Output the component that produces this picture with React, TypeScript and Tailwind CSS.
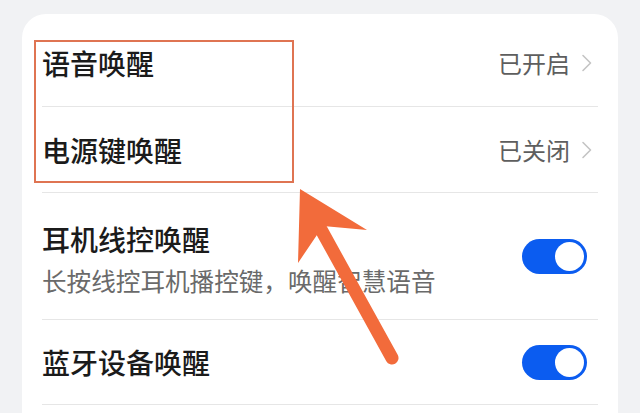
import React from 'react';

const font = { fontFamily: '"Noto Sans CJK SC", "Noto Sans", sans-serif' };

function Chevron() {
  return (
    <svg width="12" height="18" viewBox="0 0 12 18" className="ml-[11px] mr-[5px]">
      <path d="M2 1.5 L9.5 9 L2 16.5" fill="none" stroke="#c4c4c4" strokeWidth="1.6" strokeLinecap="round" strokeLinejoin="round" />
    </svg>
  );
}

function Toggle() {
  return (
    <div className="mr-[11px] flex h-[35px] w-[65px] items-center justify-end rounded-full bg-[#0b5cf0] px-[3px]">
      <div className="h-[29px] w-[29px] rounded-full bg-white" />
    </div>
  );
}

function LinkRow({ title, value, h }: { title: string; value: string; h: string }) {
  return (
    <div className={`flex items-center justify-between border-b border-[#e6e6e6] ${h}`}>
      <span className="text-[28px] leading-[40px] font-medium text-[#1b1b1b]">{title}</span>
      <div className="flex items-center">
        <span className="text-[24px] leading-[34px] text-[#5e5e5e]">{value}</span>
        <Chevron />
      </div>
    </div>
  );
}

export default function App() {
  return (
    <div className="relative h-[413px] w-[640px] overflow-hidden bg-[#f1f2f4] px-[22px] pt-[14px]" style={font}>
      <div className="rounded-t-[24px] bg-white px-5 pt-[6px]">
        <LinkRow title="语音唤醒" value="已开启" h="h-[87px]" />
        <LinkRow title="电源键唤醒" value="已关闭" h="h-[86px]" />
        <div className="flex h-[127px] items-start justify-between border-b border-[#e6e6e6]">
          <div className="flex flex-col pt-[26px]">
            <span className="text-[28px] leading-[40px] font-medium text-[#1b1b1b]">耳机线控唤醒</span>
            <span className="text-[24.6px] leading-[42px] text-[#6a6a6a]">长按线控耳机播控键，唤醒智慧语音</span>
          </div>
          <div className="flex h-full items-center">
            <Toggle />
          </div>
        </div>
        <div className="flex h-[85px] items-center justify-between border-b border-[#e6e6e6]">
          <span className="text-[28px] leading-[40px] font-medium text-[#1b1b1b]">蓝牙设备唤醒</span>
          <Toggle />
        </div>
        <div className="h-[40px]" />
      </div>

      {/* annotation overlay */}
      <div className="absolute left-[34px] top-[40px] h-[143px] w-[260px] border-2 border-[#df7452]" />
      <svg className="absolute left-0 top-0" width="640" height="413" viewBox="0 0 640 413">
        <line x1="318" y1="224" x2="392" y2="358" stroke="#f26b3b" strokeWidth="13" strokeLinecap="round" />
        <polygon points="300,189 367,230 323,226 298,263" fill="#f26b3b" />
      </svg>
    </div>
  );
}
